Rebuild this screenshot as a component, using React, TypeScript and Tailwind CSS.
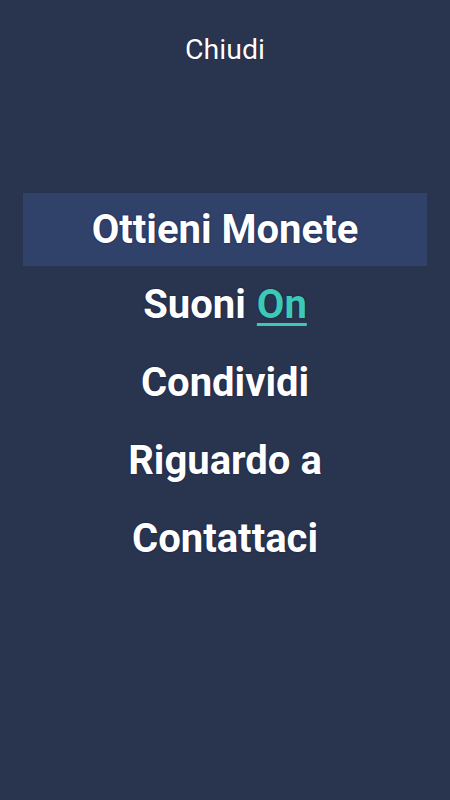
const items = ["Condividi", "Riguardo a", "Contattaci"];

export default function App() {
  return (
    <div className="flex h-[800px] w-[450px] flex-col items-center bg-[#29354f] font-['Roboto',sans-serif] text-white">
      <div className="flex h-[100px] items-center text-[28.5px] leading-none [text-shadow:0_0_1px_#0a0f30]">
        Chiudi
      </div>
      <div className="mt-[93px] flex w-full flex-col px-[23px] text-[40px] font-bold leading-none [text-shadow:0_0_1.5px_#0a0f40]">
        <div className="flex h-[73px] items-center justify-center bg-[#30416a]">Ottieni Monete</div>
        <div className="flex h-[78px] items-center justify-center gap-[11px]">
          Suoni
          <span className="text-[#3cc9b5] underline decoration-[3px] underline-offset-[5px]">On</span>
        </div>
        {items.map((t) => (
          <div key={t} className="flex h-[78px] items-center justify-center">
            {t}
          </div>
        ))}
      </div>
    </div>
  );
}
